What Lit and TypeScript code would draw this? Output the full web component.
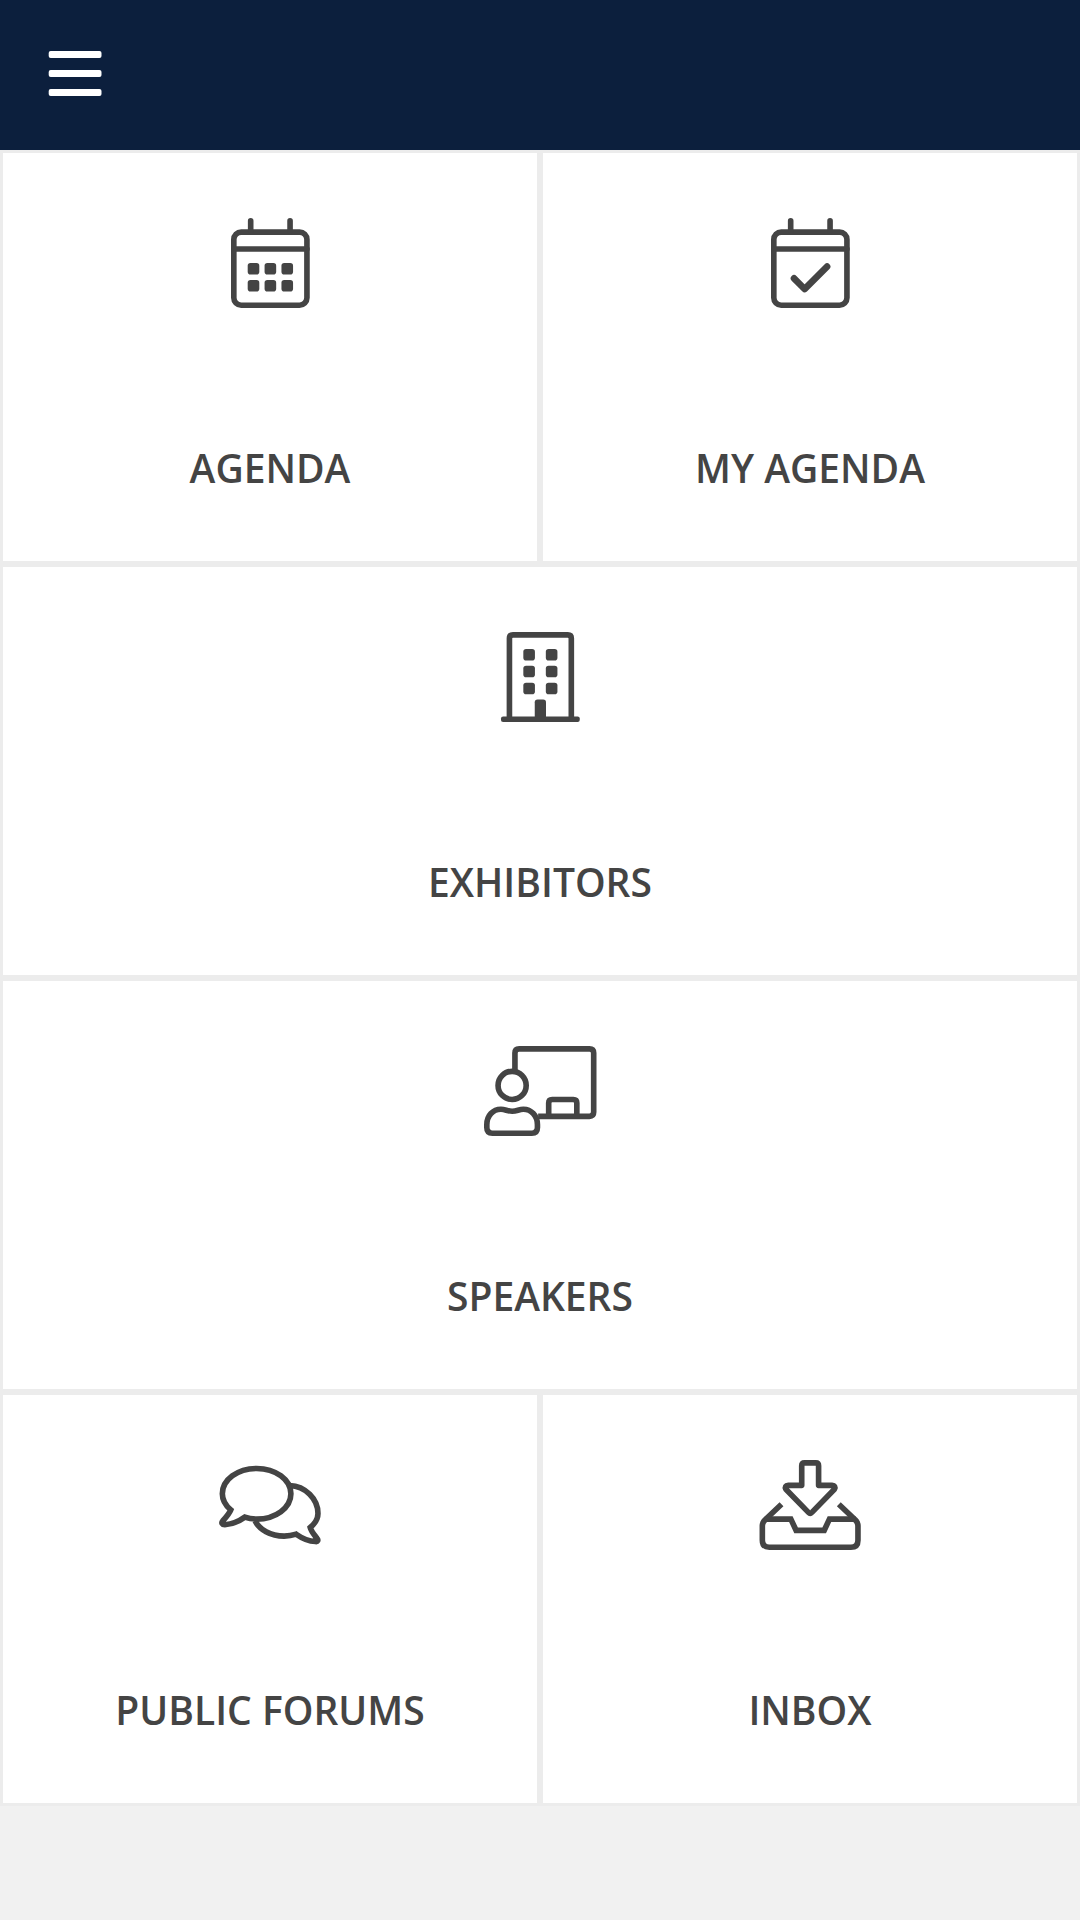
import { LitElement, html, css, svg, SVGTemplateResult } from "lit";
import { customElement } from "lit/decorators.js";

interface Tile {
  label: string;
  href: string;
  wide?: boolean;
  viewBox: string;
  icon: SVGTemplateResult;
}

const square = (x: number, y: number) =>
  svg`<rect class="solid" x=${x} y=${y} width="66" height="66" rx="16" />`;

const calendarFrame = svg`
  <rect x="16" y="80" width="416" height="416" rx="42" />
  <path d="M16 176H432M112 16V72M336 16V72" />`;

const tiles: Tile[] = [
  {
    label: "AGENDA",
    href: "#agenda",
    viewBox: "0 0 448 512",
    icon: svg`${calendarFrame}
      ${[256, 352].map((y) => [95, 191, 287].map((x) => square(x, y)))}`,
  },
  {
    label: "MY AGENDA",
    href: "#my-agenda",
    viewBox: "0 0 448 512",
    icon: svg`${calendarFrame}<path class="check" d="M131 343L191 404L319 276" />`,
  },
  {
    label: "EXHIBITORS",
    href: "#exhibitors",
    wide: true,
    viewBox: "0 0 448 512",
    icon: svg`
      <path d="M48 496V36Q48 16 68 16H380Q400 16 400 36V496" />
      <rect class="solid" x="0" y="480" width="448" height="32" rx="12" />
      ${[96, 192, 288].map((y) => [127, 255].map((x) => square(x, y)))}
      <path class="solid" d="M192 500V400Q192 384 208 384H240Q256 384 256 400V500Z" />`,
  },
  {
    label: "SPEAKERS",
    href: "#speakers",
    wide: true,
    viewBox: "0 0 640 512",
    icon: svg`
      <circle cx="160" cy="224" r="80" />
      <path class="butt" d="M176 144V40Q176 16 200 16H600Q624 16 624 40V376Q624 400 600 400H308" />
      <path class="butt" d="M368 400V324Q368 304 388 304H508Q528 304 528 324V400" />
      <path d="M16 464V448C16 395 52 360 96 360C122 360 132 371 160 371C188 371 198 360 224 360C268 360 304 395 304 448V464Q304 496 272 496H48Q16 496 16 464Z" />`,
  },
  {
    label: "PUBLIC FORUMS",
    href: "#public-forums",
    viewBox: "-3 0 576 512",
    icon: svg`
      <path class="sharp" d="M64 284C36 260 16 229 16 192C16 112 103 48 211 48S406 112 406 192S319 336 211 336C188 336 165 333 144 325C110 350 70 366 30 368C15 368 9 358 18 347C38 325 54 308 64 284Z" />
      <path class="sharp" d="M399 145C488 148 560 222 560 304C560 336 543 361 516 384C523 410 543 430 554 445C564 457 558 466 546 464C508 462 470 446 436 422C412 430 390 433 368 433C290 433 226 395 202 346" />`,
  },
  {
    label: "INBOX",
    href: "#inbox",
    viewBox: "-3 0 576 512",
    icon: svg`
      <path d="M256 16H320Q336 16 336 32V144H412Q436 146 426 166L298 298Q288 308 278 298L150 166Q140 146 164 144H240V32Q240 16 256 16Z" />
      <path class="butt" d="M125 252L32 340Q16 356 16 376V456Q16 496 56 496H520Q560 496 560 456V376Q560 356 544 340L451 252" />
      <path class="sharp" d="M30 336H178L208 400H368L398 336H546" />`,
  },
];

@customElement("app-root")
export class AppRoot extends LitElement {
  static styles = css`
    :host {
      display: block;
      min-height: 100vh;
      background: #f1f1f1;
      color: #444;
      font-family: "Open Sans", "Noto Sans", sans-serif;
    }
    .header {
      display: flex;
      align-items: center;
      box-sizing: border-box;
      height: 150px;
      padding: 0 48px 3px;
      background: #0c1f3d;
    }
    .menu {
      display: flex;
      padding: 0;
      border: 0;
      background: none;
      color: #fff;
      cursor: pointer;
    }
    .menu-icon {
      width: 54px;
      height: 45px;
      fill: currentColor;
    }
    .grid {
      display: grid;
      grid-template-columns: 1fr 1fr;
    }
    .tile {
      display: flex;
      flex-direction: column;
      align-items: center;
      gap: 133px;
      box-sizing: border-box;
      padding: 65px 16px;
      height: 414px;
      border: 3px solid #ececec;
      background: #fff;
      color: inherit;
      text-decoration: none;
    }
    .wide {
      grid-column: 1 / -1;
    }
    .icon {
      height: 90px;
      overflow: visible;
      fill: none;
      stroke: currentColor;
      stroke-width: 32px;
      stroke-linecap: round;
      stroke-linejoin: round;
    }
    .solid {
      fill: currentColor;
      stroke: none;
    }
    .check {
      stroke-width: 38px;
    }
    .butt {
      stroke-linecap: butt;
    }
    .sharp {
      stroke-linecap: butt;
      stroke-linejoin: miter;
    }
    .label {
      font-size: 39px;
      line-height: 54px;
      font-weight: 600;
      white-space: nowrap;
    }
  `;

  render() {
    return html`
      <header class="header">
        <button class="menu" type="button" aria-label="Menu">
          <svg class="menu-icon" viewBox="0 0 54 45" aria-hidden="true">
            ${[0, 19, 38].map(
              (y) => svg`<rect x="0.7" y=${y} width="52.8" height="7" rx="2" />`
            )}
          </svg>
        </button>
      </header>
      <nav class="grid">
        ${tiles.map(
          (tile) => html`
            <a class="tile ${tile.wide ? "wide" : ""}" href=${tile.href}>
              <svg class="icon" viewBox=${tile.viewBox} aria-hidden="true">${tile.icon}</svg>
              <span class="label">${tile.label}</span>
            </a>
          `
        )}
      </nav>
    `;
  }
}
